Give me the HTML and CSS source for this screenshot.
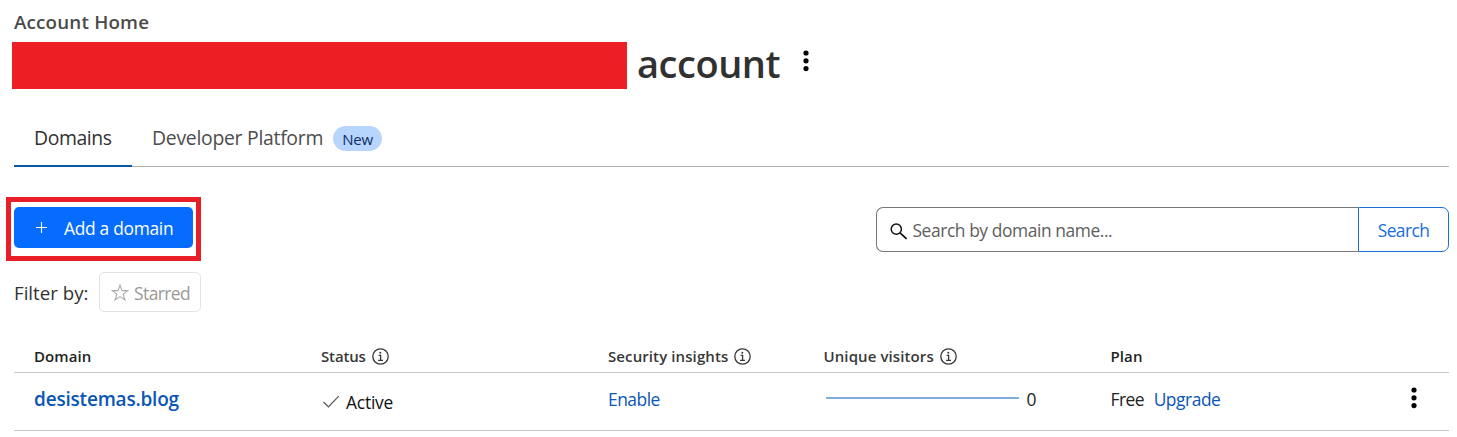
FILE: index.html
```html
<!DOCTYPE html>
<html lang="en">
<head>
<meta charset="utf-8">
<title>Account Home</title>
<link rel="stylesheet" href="styles.css">
</head>
<body>
<svg class="defs" width="0" height="0">
  <symbol id="dots" viewBox="0 0 6 22"><circle cx="3" cy="3" r="2.6"/><circle cx="3" cy="10.8" r="2.6"/><circle cx="3" cy="18.6" r="2.6"/></symbol>
  <symbol id="info" viewBox="0 0 17 17"><g fill="none" stroke="currentColor" stroke-width="1.3"><circle cx="8.5" cy="8.5" r="7.7"/><path d="M6.6 7.3h2v5M6.1 12.3h4.9"/></g><circle cx="8.3" cy="4.7" r="1" fill="currentColor"/></symbol>
</svg>
<main class="page">
  <header class="header">
    <div class="crumb">Account Home</div>
    <div class="title-row">
      <span class="redacted"></span>
      <h1 class="title">account</h1>
      <svg class="title-dots" width="6" height="22"><use href="#dots"/></svg>
    </div>
  </header>
  <nav class="tabs">
    <a class="tab tab-active"><span>Domains</span></a>
    <a class="tab"><span class="tab-dev">Developer Platform</span><span class="badge">New</span></a>
  </nav>
  <section class="toolbar">
    <div class="highlight">
      <button class="add"><svg width="11" height="11" viewBox="0 0 11 11"><path d="M5.5 0v11M0 5.5h11" stroke="#fff" stroke-width="1.1"/></svg><span>Add a domain</span></button>
    </div>
    <div class="search">
      <div class="field">
        <svg width="18" height="17" viewBox="0 0 18 17" fill="none" stroke="#111"><circle cx="6.3" cy="6.2" r="5.1" stroke-width="1.5"/><path d="M10 9.9l6.6 6" stroke-width="1.8"/></svg>
        <span class="placeholder">Search by domain name...</span>
      </div>
      <button class="go">Search</button>
    </div>
  </section>
  <section class="filter">
    <span class="filter-label">Filter by:</span>
    <button class="starred"><svg width="18" height="17" viewBox="0 0 18 17" fill="none" stroke="#aaa" stroke-width="1.1"><path d="M9 1.1l2 5.5h5.7l-4.5 3.5 1.7 5.8L9 12.6l-4.9 3.3 1.7-5.8-4.5-3.5H7z"/></svg><span>Starred</span></button>
  </section>
  <section class="table">
    <div class="row head">
      <div class="dark">Domain</div>
      <div class="h-status"><span>Status</span><svg width="17" height="17"><use href="#info"/></svg></div>
      <div class="h-wide"><span>Security insights</span><svg width="17" height="17"><use href="#info"/></svg></div>
      <div class="h-wide"><span>Unique visitors</span><svg width="17" height="17"><use href="#info"/></svg></div>
      <div class="dark">Plan</div>
      <div></div>
    </div>
    <div class="row item">
      <div><a class="domain">desistemas.blog</a></div>
      <div class="status"><svg width="18" height="14" viewBox="0 0 18 14" fill="none" stroke="#555" stroke-width="1.2"><path d="M1.5 7l5 5L16.7 1.2"/></svg><span>Active</span></div>
      <div><a class="link enable">Enable</a></div>
      <div><span class="spark"></span><span class="count">0</span></div>
      <div><span class="free">Free</span><a class="link upgrade">Upgrade</a></div>
      <div class="menu"><svg width="6" height="22"><use href="#dots"/></svg></div>
    </div>
  </section>
</main>
</body>
</html>
```
FILE: styles.css
```css
* { box-sizing: border-box; }
body { margin: 0; background: #fff; color: #313131; font-family: "Open Sans", "Noto Sans", sans-serif; font-size: 17.4px; white-space: nowrap; }
button { font: inherit; margin: 0; padding: 0; }
svg { display: block; flex: none; }
.defs { position: absolute; }
.page { height: 437px; padding: 0 8px 0 14px; overflow: hidden; }
.crumb { height: 42px; padding-top: 9px; font-size: 18.8px; line-height: 26px; font-weight: 600; letter-spacing: .18px; color: #4a4a4a; }
.title-row { display: flex; height: 47px; margin-left: -2px; }
.redacted { width: 615px; background: #ee1e25; }
.title { width: 143px; margin: 0 0 0 10px; font-size: 38px; line-height: 43px; font-weight: 600; letter-spacing: -.45px; }
.title-dots { margin: 8px 0 0 22.5px; }
.tabs { display: flex; height: 78px; padding-top: 21px; border-bottom: 1px solid #b0b0b0; font-size: 19.4px; letter-spacing: -.28px; color: #4d4d4d; }
.tab { display: flex; align-items: center; height: 57px; padding: 0 20px; }
.tab > span:first-child { margin-top: -2px; }
.tab-active { width: 118px; border-bottom: 2px solid #0a58a8; padding-top: 2px; color: #313131; letter-spacing: -.4px; }
.tab-dev { width: 171px; }
.badge { width: 49px; height: 25px; margin-left: 10px; border-radius: 13px; background: #b8d5ff; color: #0b2f66; font-size: 15px; line-height: 26px; text-align: center; }
.toolbar { display: flex; justify-content: space-between; margin: 30px 0 0 -8px; }
.highlight { width: 195px; height: 64px; padding: 5px 3px; border: 5px solid #e81e29; }
.add { display: flex; align-items: center; width: 179px; height: 41px; padding: 1px 0 0 22px; gap: 17px; border: 0; border-radius: 5px; background: #066cff; color: #fff; letter-spacing: -.3px; }
.add svg { margin-top: -2px; }
.search { display: flex; width: 573px; height: 45px; margin-top: 10px; }
.field { display: flex; align-items: center; flex: 1; gap: 5px; padding: 0 0 0 12.5px; border: 1px solid #777; border-right: 0; border-radius: 7px 0 0 7px; color: #5e5e5e; letter-spacing: -.42px; }
.field svg { margin-top: 4px; }
.go { width: 91px; border: 1px solid #1a6ddb; border-radius: 0 7px 7px 0; background: #fff; color: #1a6ddb; letter-spacing: -.6px; }
.filter { display: flex; align-items: center; height: 40px; margin-top: 11px; }
.filter-label { width: 85px; padding-top: 1px; font-size: 18.7px; }
.starred { display: flex; align-items: center; width: 102px; height: 40px; gap: 5px; padding: 1px 0 0 11px; border: 1px solid #e3e3e3; border-radius: 5px; background: #fff; color: #999; letter-spacing: -.55px; }
.starred svg { margin-top: -1px; }
.row { display: grid; grid-template-columns: 287px 287px 215.5px 287px 1fr 45.5px; padding-left: 20px; border-bottom: 1px solid #c9c9c9; }
.row > div { display: flex; align-items: center; }
.head { height: 33px; margin-top: 28px; font-size: 15px; font-weight: 600; color: #383838; }
.head svg { margin: 0 0 0 6px; }
.h-status { letter-spacing: -.15px; }
.h-wide { letter-spacing: .1px; }
.head .dark { color: #222; letter-spacing: .1px; }
.item { height: 58px; color: #222; }
.item > div { padding-bottom: 5px; }
.domain { margin-top: -1px; font-size: 19px; font-weight: 600; letter-spacing: -.2px; color: #0a56b5; }
.item .status { padding: 1px 0 0 1px; gap: 6px; color: #111; letter-spacing: -.2px; }
.link { color: #0a56b5; }
.enable { letter-spacing: -.5px; }
.spark { width: 193px; height: 2px; margin: -2px 8px 0 2px; background: #80aee0; }
.free { letter-spacing: -.5px; }
.upgrade { margin-left: 9.5px; letter-spacing: -.45px; }
.item .menu { padding: 0 0 8px 7px; }
```
